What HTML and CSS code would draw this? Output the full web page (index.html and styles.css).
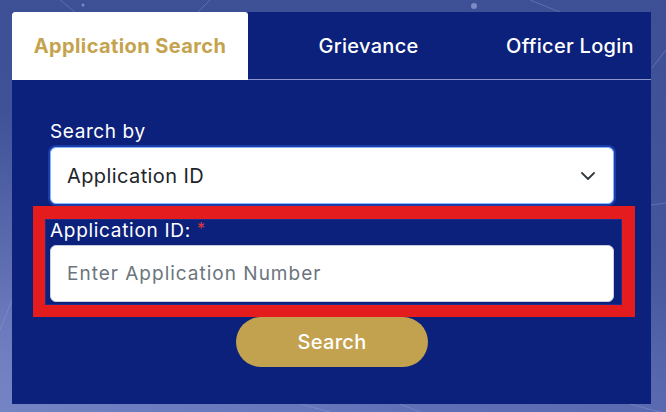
FILE: index.html
```html
<!DOCTYPE html>
<html lang="en">
<head>
<meta charset="utf-8">
<title>Application Search</title>
<link rel="stylesheet" href="styles.css">
</head>
<body>
<svg class="bg-lines" width="666" height="412" viewBox="0 0 666 412" aria-hidden="true">
  <g stroke="#9aa6dc" stroke-opacity="0.35" stroke-width="1" fill="none">
    <line x1="0" y1="330" x2="12" y2="300"/>
    <line x1="60" y1="0" x2="75" y2="12"/>
    <line x1="198" y1="12" x2="210" y2="0"/>
    <line x1="530" y1="0" x2="560" y2="12"/>
    <line x1="652" y1="68" x2="666" y2="50"/>
    <line x1="651" y1="205" x2="666" y2="203"/>
    <line x1="300" y1="404" x2="330" y2="412"/>
    <line x1="400" y1="404" x2="420" y2="412"/>
    <line x1="630" y1="404" x2="660" y2="412"/>
  </g>
  <circle cx="474" cy="6" r="3" fill="#7d89c6"/>
  <circle cx="83" cy="5" r="1.5" fill="#7d89c6"/>
</svg>
<main class="card">
  <nav class="tabs">
    <div class="tab tab-active">Application Search</div>
    <div class="tab">Grievance</div>
    <div class="tab">Officer Login</div>
  </nav>
  <form class="form">
    <label class="label label-top">Search by</label>
    <div class="select">
      <span class="select-value">Application ID</span>
      <svg class="chevron" width="14" height="8" viewBox="0 0 14 8"><polyline points="1,1 7,7 13,1" fill="none" stroke="#343a40" stroke-width="1.8" stroke-linecap="round" stroke-linejoin="round"/></svg>
    </div>
    <div class="highlight">
      <label class="label label-field">Application ID: <span class="req">*</span></label>
      <div class="input"><span class="placeholder">Enter Application Number</span></div>
    </div>
    <button type="button" class="btn">Search</button>
  </form>
</main>
</body>
</html>
```
FILE: styles.css
```css
html, body {
  margin: 0;
  padding: 0;
}
body {
  width: 666px;
  height: 412px;
  overflow: hidden;
  position: relative;
  font-family: "Inter", "Open Sans", sans-serif;
  background:
    radial-gradient(ellipse 420px 300px at 0% 100%, #7584c4 0%, rgba(117,132,196,0) 100%),
    radial-gradient(ellipse 500px 160px at 45% 100%, #6272b9 0%, rgba(98,114,185,0) 100%),
    linear-gradient(180deg, #3d4f95 0%, #43559b 60%, #5867ad 100%);
}
.bg-lines {
  position: absolute;
  left: 0;
  top: 0;
}
.card {
  position: relative;
  margin: 12px 0 0 12px;
  width: 639px;
  height: 392px;
  background: #0c217b;
  display: flex;
  flex-direction: column;
}
.tabs {
  display: grid;
  grid-template-columns: 236px 241px 1fr;
  height: 68px;
}
.tab {
  display: flex;
  align-items: center;
  justify-content: center;
  color: #ffffff;
  font-size: 20px;
  font-weight: 500;
  letter-spacing: 0.3px;
  border-bottom: 1px solid #8c96cb;
  box-sizing: border-box;
  height: 68px;
}
.tab-active {
  background: #ffffff;
  color: #c5a34e;
  font-weight: 700;
  letter-spacing: 0.4px;
  border-bottom: none;
  border-radius: 3px 3px 0 0;
}
.form {
  display: flex;
  flex-direction: column;
  padding: 0 37px 0 38px;
}
.label {
  color: #ffffff;
  font-size: 19px;
  font-weight: 400;
  letter-spacing: 0.6px;
}
.label-top {
  margin-top: 38px;
  line-height: 27px;
}
.select {
  margin-top: 2px;
  height: 57px;
  box-sizing: border-box;
  background: #ffffff;
  border: 1px solid #86b7fe;
  border-radius: 6px;
  box-shadow: 0 0 0 2px #1a3ca9;
  display: flex;
  align-items: center;
  justify-content: space-between;
  padding: 0 18px 0 16px;
}
.select-value {
  font-size: 20px;
  letter-spacing: 0.4px;
  color: #212529;
}
.chevron {
  display: block;
}
.highlight {
  margin: 2px -21px 0 -17px;
  border-style: solid;
  border-color: #e41c1e;
  border-width: 13px 13px 12px 12px;
  padding: 0 8px 3px 5px;
  box-shadow: inset 0 0 0 1px #1c2f8c;
  display: flex;
  flex-direction: column;
}
.label-field {
  line-height: 22px;
  margin-top: 1px;
  letter-spacing: 0.7px;
}
.req {
  display: inline-block;
  color: #e0383e;
  font-size: 16px;
  line-height: 16px;
  transform: translateY(-3px);
}
.input {
  margin-top: 3px;
  height: 57px;
  box-sizing: border-box;
  background: #ffffff;
  border: 1px solid #c9cde0;
  border-radius: 6px;
  display: flex;
  align-items: center;
  padding: 0 16px;
}
.placeholder {
  font-size: 19px;
  letter-spacing: 1px;
  color: #6c757d;
}
.btn {
  align-self: center;
  width: 192px;
  height: 50px;
  border: none;
  border-radius: 25px;
  background: #c2a24f;
  color: #ffffff;
  font-family: inherit;
  font-size: 20px;
  font-weight: 500;
  letter-spacing: 0.3px;
  cursor: pointer;
}
```
